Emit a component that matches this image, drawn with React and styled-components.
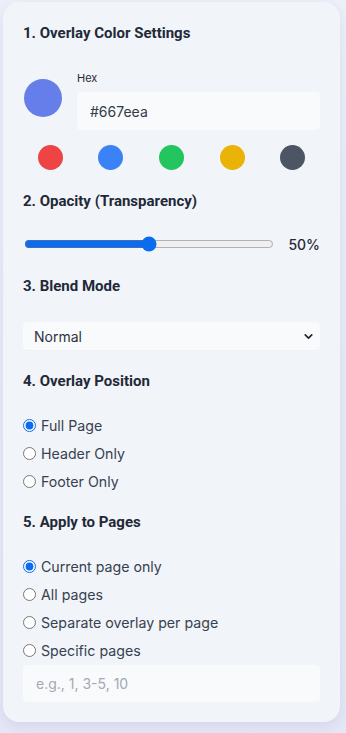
import React, { useState } from "react";
import styled, { createGlobalStyle } from "styled-components";
import { ChevronDown } from "lucide-react";

const Global = createGlobalStyle`
  html, body { margin: 0; padding: 0; }
  body {
    background: linear-gradient(180deg, #eef0f9 0%, #e6e8f6 100%);
    font-family: Inter, "Noto Sans", sans-serif;
    min-height: 733px;
  }
  * { box-sizing: border-box; }
`;

const Wrap = styled.div`
  padding: 2px 6px 11px 3px;
`;

const Card = styled.div`
  background: #f1f4f8;
  border-radius: 16px;
  box-shadow: 0 4px 14px rgba(90, 100, 170, 0.14);
  padding: 21px 20px 20px 20px;
  display: flex;
  flex-direction: column;
`;

const Heading = styled.h2`
  margin: ${(p) => p.$mt || 0}px 0 0 0;
  font-family: Roboto, "Liberation Sans", sans-serif;
  font-weight: 700;
  font-size: 15px;
  line-height: 20px;
  color: #1f2937;
`;

const ColorRow = styled.div`
  margin-top: 28px;
  display: flex;
  align-items: flex-start;
  gap: 15px;
`;

const BigSwatch = styled.div`
  width: 38px;
  height: 38px;
  border-radius: 50%;
  background: #667eea;
  margin-top: 8px;
  margin-left: 1px;
  flex: none;
`;

const HexCol = styled.div`
  flex: 1;
  display: flex;
  flex-direction: column;
`;

const HexLabel = styled.label`
  font-size: 11px;
  line-height: 14px;
  color: #1f2937;
  margin-bottom: 7px;
`;

const TextInput = styled.input`
  height: ${(p) => p.$h || 38}px;
  border: none;
  outline: none;
  border-radius: 4px;
  background: #f8fafc;
  padding: 0 13px;
  font-family: Inter, "Noto Sans", sans-serif;
  font-size: 14px;
  color: #333a45;
  width: 100%;
  &::placeholder { color: #a3a9b3; }
`;

const Swatches = styled.div`
  margin: 15px -3px 0 -3px;
  display: flex;
  justify-content: space-around;
`;

const Swatch = styled.button`
  width: 25px;
  height: 25px;
  border-radius: 50%;
  border: none;
  padding: 0;
  background: ${(p) => p.$c};
  cursor: pointer;
`;

const SliderRow = styled.div`
  margin-top: 23px;
  height: 20px;
  display: flex;
  align-items: center;
  gap: 14px;
`;

const Range = styled.input`
  flex: 1;
  margin: 0 0 0 1px;
  accent-color: #0b6cf0;
`;

const Percent = styled.span`
  font-size: 14px;
  font-weight: 500;
  color: #1f2937;
  width: 32px;
  text-align: right;
`;

const SelectWrap = styled.div`
  position: relative;
  margin-top: 26px;
`;

const Select = styled.select`
  appearance: none;
  width: 100%;
  height: 28px;
  border: none;
  border-radius: 4px;
  background: #f8fafc;
  box-shadow: 0 1px 1px rgba(0, 0, 0, 0.02);
  padding: 0 11px;
  font-family: Inter, "Noto Sans", sans-serif;
  font-size: 14px;
  color: #2d3340;
  outline: none;
`;

const Chevron = styled.span`
  position: absolute;
  right: 5px;
  top: 8px;
  display: flex;
  color: #1f2937;
  pointer-events: none;
`;

const RadioGroup = styled.div`
  margin-top: ${(p) => p.$mt || 24}px;
  display: flex;
  flex-direction: column;
  gap: 8px;
`;

const RadioLabel = styled.label`
  display: flex;
  align-items: center;
  height: 20px;
  gap: 5px;
  font-size: 14.2px;
  color: #374151;
  cursor: pointer;
  input {
    margin: 0 0 0 0;
    width: 13px;
    height: 13px;
    accent-color: #0b6cf0;
  }
`;

const PagesInputWrap = styled.div`
  margin-top: 5px;
`;

function Radio({ name, value, checked, onChange, children }) {
  return (
    <RadioLabel>
      <input type="radio" name={name} value={value} checked={checked} onChange={() => onChange(value)} />
      {children}
    </RadioLabel>
  );
}

export default function App() {
  const [opacity, setOpacity] = useState(50);
  const [pos, setPos] = useState("full");
  const [pages, setPages] = useState("current");
  const swatches = ["#ef4444", "#3b82f6", "#22c55e", "#eab308", "#4b5563"];

  return (
    <>
      <Global />
      <Wrap>
        <Card>
          <Heading>1. Overlay Color Settings</Heading>
          <ColorRow>
            <BigSwatch />
            <HexCol>
              <HexLabel>Hex</HexLabel>
              <TextInput defaultValue="#667eea" />
            </HexCol>
          </ColorRow>
          <Swatches>
            {swatches.map((c) => (
              <Swatch key={c} $c={c} />
            ))}
          </Swatches>

          <Heading $mt={21}>2. Opacity (Transparency)</Heading>
          <SliderRow>
            <Range type="range" min="0" max="100" value={opacity} onChange={(e) => setOpacity(e.target.value)} />
            <Percent>{opacity}%</Percent>
          </SliderRow>

          <Heading $mt={22}>3. Blend Mode</Heading>
          <SelectWrap>
            <Select defaultValue="normal">
              <option value="normal">Normal</option>
              <option value="multiply">Multiply</option>
              <option value="screen">Screen</option>
              <option value="overlay">Overlay</option>
            </Select>
            <Chevron>
              <ChevronDown size={13} strokeWidth={3.2} />
            </Chevron>
          </SelectWrap>

          <Heading $mt={21}>4. Overlay Position</Heading>
          <RadioGroup>
            <Radio name="pos" value="full" checked={pos === "full"} onChange={setPos}>Full Page</Radio>
            <Radio name="pos" value="header" checked={pos === "header"} onChange={setPos}>Header Only</Radio>
            <Radio name="pos" value="footer" checked={pos === "footer"} onChange={setPos}>Footer Only</Radio>
          </RadioGroup>

          <Heading $mt={21}>5. Apply to Pages</Heading>
          <RadioGroup>
            <Radio name="pages" value="current" checked={pages === "current"} onChange={setPages}>Current page only</Radio>
            <Radio name="pages" value="all" checked={pages === "all"} onChange={setPages}>All pages</Radio>
            <Radio name="pages" value="separate" checked={pages === "separate"} onChange={setPages}>Separate overlay per page</Radio>
            <Radio name="pages" value="specific" checked={pages === "specific"} onChange={setPages}>Specific pages</Radio>
          </RadioGroup>
          <PagesInputWrap>
            <TextInput $h={37} placeholder="e.g., 1, 3-5, 10" />
          </PagesInputWrap>
        </Card>
      </Wrap>
    </>
  );
}
